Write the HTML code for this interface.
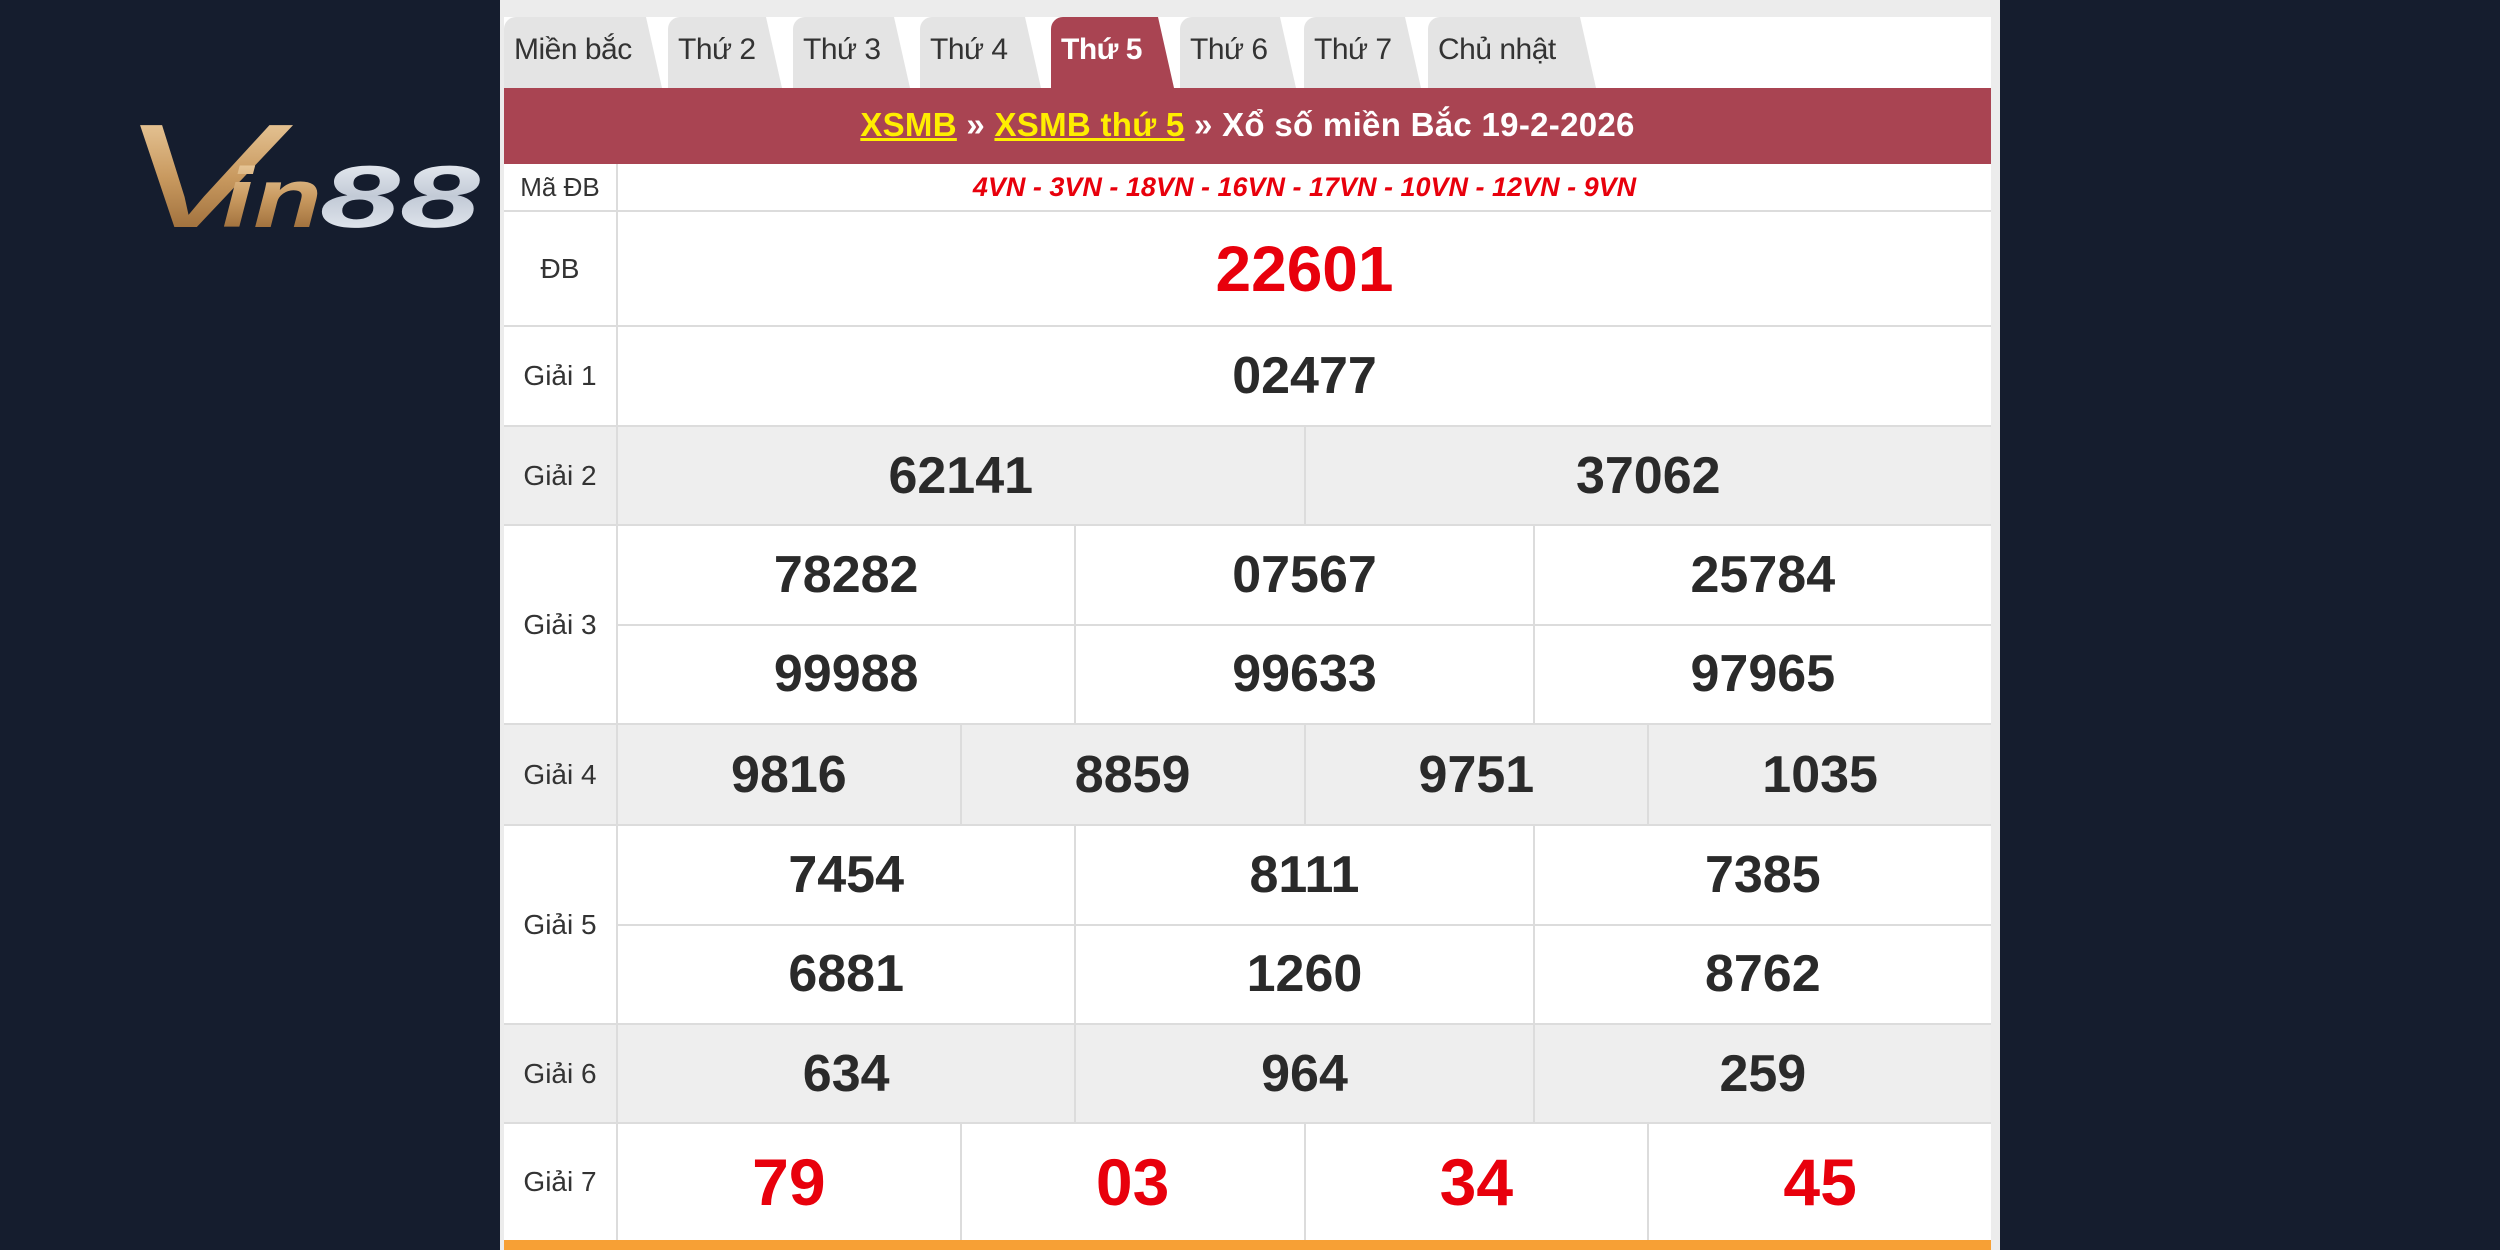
<!DOCTYPE html>
<html><head><meta charset="utf-8"><style>
*{margin:0;padding:0;box-sizing:border-box}
body{width:2500px;height:1250px;background:#151d2e;position:relative;overflow:hidden;font-family:"Liberation Sans",Arial,sans-serif}
.panel{position:absolute;left:500px;top:0;width:1500px;height:1250px;background:#ececec}
.tabbar{position:absolute;left:504px;top:17px;width:1487px;height:71px;background:#fff}
.tab{position:absolute;top:17px;height:71px;background:#e4e4e4;border-radius:12px 10px 0 0;clip-path:polygon(0 0,calc(100% - 16px) 0,100% 100%,0 100%);font-size:30px;color:#333;line-height:66px;padding-left:10px;letter-spacing:-0.5px}
.tab.act{background:#a94452;color:#fff;font-weight:bold}
.hdr{position:absolute;left:504px;top:88px;width:1487px;height:76px;background:#a94452;color:#fff;font-weight:bold;font-size:33px;text-align:center;line-height:74px;letter-spacing:0.3px}
.hdr u{color:#ffee00}
.row{position:absolute;left:504px;width:1487px;display:flex;border-bottom:2px solid #dcdcdc}
.lab{width:114px;border-right:2px solid #dcdcdc;display:flex;align-items:center;justify-content:center;font-size:28px;color:#333}
.cells{flex:1;display:flex;flex-direction:column}
.sub{flex:1;display:flex}
.sub+.sub{border-top:2px solid #dcdcdc}
.c{flex:1;display:flex;align-items:center;justify-content:center;font-weight:bold;font-size:52px;color:#2a2a2a}
.c+.c{border-left:2px solid #dcdcdc}
.w{background:#fff}.g{background:#eee}
.red{color:#e8000c}
</style></head><body>
<svg style="position:absolute;left:110px;top:100px" width="390" height="150">
<defs>
<linearGradient id="gold" x1="0" y1="0" x2="0" y2="1"><stop offset="0" stop-color="#f3d8ae"/><stop offset="0.5" stop-color="#c99a60"/><stop offset="1" stop-color="#8a5a2a"/></linearGradient>
<linearGradient id="silv" x1="0" y1="0" x2="0" y2="1"><stop offset="0" stop-color="#f4f7fb"/><stop offset="0.5" stop-color="#c2cad6"/><stop offset="1" stop-color="#eef2f7"/></linearGradient>
</defs>
<text x="10" y="127" font-family="Liberation Sans" font-style="italic" font-size="148" fill="url(#gold)" textLength="155" lengthAdjust="spacingAndGlyphs">V</text>
<text x="112" y="127" font-family="Liberation Sans" font-style="italic" font-weight="bold" font-size="84" fill="url(#gold)" textLength="100" lengthAdjust="spacingAndGlyphs">in</text>
<text x="210" y="127" font-family="Liberation Sans" font-style="italic" font-weight="bold" font-size="88" fill="url(#silv)" textLength="160" lengthAdjust="spacingAndGlyphs">88</text>
</svg>
<div class="panel"></div>
<div class="tabbar"></div>
<div class="tab" style="left:504px;width:158px">Miền bắc</div>
<div class="tab" style="left:668px;width:114px">Thứ 2</div>
<div class="tab" style="left:793px;width:117px">Thứ 3</div>
<div class="tab" style="left:920px;width:121px">Thứ 4</div>
<div class="tab act" style="left:1051px;width:123px">Thứ 5</div>
<div class="tab" style="left:1180px;width:116px">Thứ 6</div>
<div class="tab" style="left:1304px;width:117px">Thứ 7</div>
<div class="tab" style="left:1428px;width:168px">Chủ nhật</div>
<div class="hdr"><u>XSMB</u> » <u>XSMB thứ 5</u> » Xổ số miền Bắc 19-2-2026</div>

<div class="row w" style="top:164px;height:48px"><div class="lab" style="font-size:26px">Mã ĐB</div><div class="c" style="font-size:27px;font-style:italic;color:#e8000c">4VN - 3VN - 18VN - 16VN - 17VN - 10VN - 12VN - 9VN</div></div>
<div class="row w" style="top:212px;height:115px"><div class="lab">ĐB</div><div class="c red" style="font-size:64px">22601</div></div>
<div class="row w" style="top:327px;height:100px"><div class="lab">Giải 1</div><div class="c">02477</div></div>
<div class="row g" style="top:427px;height:99px"><div class="lab">Giải 2</div><div class="c">62141</div><div class="c">37062</div></div>
<div class="row w" style="top:526px;height:199px"><div class="lab">Giải 3</div><div class="cells"><div class="sub"><div class="c">78282</div><div class="c">07567</div><div class="c">25784</div></div><div class="sub"><div class="c">99988</div><div class="c">99633</div><div class="c">97965</div></div></div></div>
<div class="row g" style="top:725px;height:101px"><div class="lab">Giải 4</div><div class="c">9816</div><div class="c">8859</div><div class="c">9751</div><div class="c">1035</div></div>
<div class="row w" style="top:826px;height:199px"><div class="lab">Giải 5</div><div class="cells"><div class="sub"><div class="c">7454</div><div class="c">8111</div><div class="c">7385</div></div><div class="sub"><div class="c">6881</div><div class="c">1260</div><div class="c">8762</div></div></div></div>
<div class="row g" style="top:1025px;height:99px"><div class="lab">Giải 6</div><div class="c">634</div><div class="c">964</div><div class="c">259</div></div>
<div class="row w" style="top:1124px;height:116px;border-bottom:none"><div class="lab">Giải 7</div><div class="c red" style="font-size:66px">79</div><div class="c red" style="font-size:66px">03</div><div class="c red" style="font-size:66px">34</div><div class="c red" style="font-size:66px">45</div></div>
<div style="position:absolute;left:504px;top:1240px;width:1487px;height:10px;background:#f7a035"></div>
</body></html>
